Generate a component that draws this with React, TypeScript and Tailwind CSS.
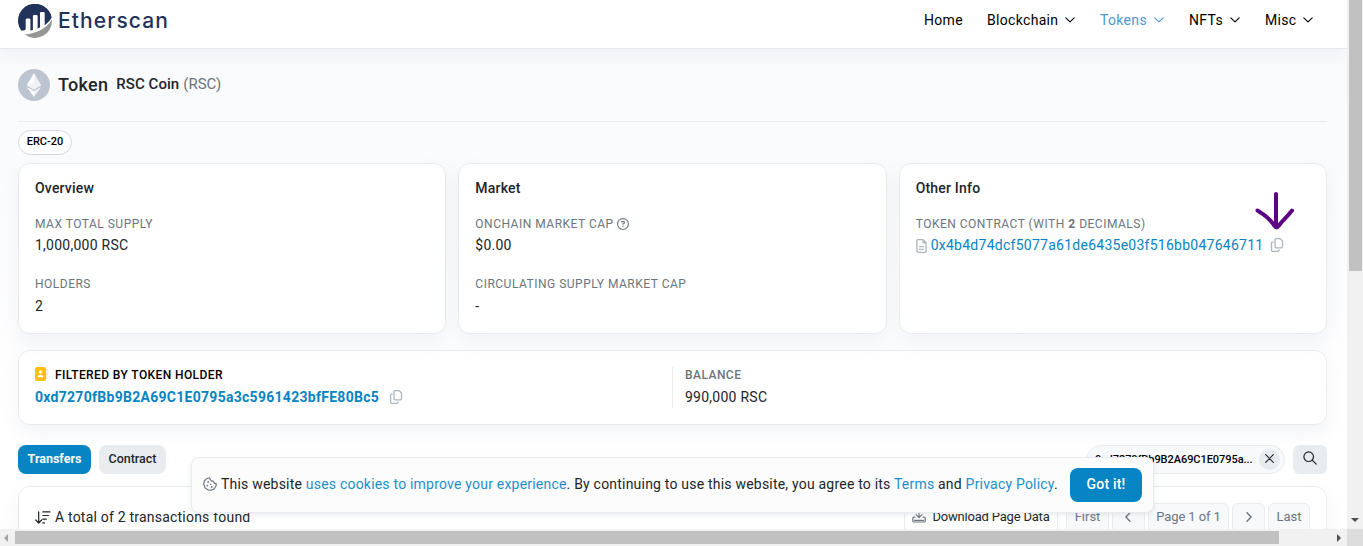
import React from "react";
import { FaRegCopy, FaRegFileLines, FaRegCircleQuestion } from "react-icons/fa6";

const Chevron = ({ className = "" }: { className?: string }) => (
  <svg className={className} width="10" height="6" viewBox="0 0 10 6" fill="none" stroke="currentColor" strokeWidth="1.1" strokeLinecap="round" strokeLinejoin="round">
    <path d="M.8.8 5 4.9 9.200.8" />
  </svg>
);

function Logo() {
  return (
    <svg width="34" height="34" viewBox="0 0 34 34">
      <path d="M3.100 26.500A17 17 0 1 1 33.700 13.500C32 16.500 29.500 19 26.700 21.200V9.300Q26.700 8 25.400 8H23.300Q22 8 22 9.300V23.500L19.600 24.600V12.300Q19.600 11 18.300 11H16.200Q14.900 11 14.900 12.300V26L12.400 26.500V15.800Q12.400 14.500 11.100 14.500H9Q7.700 14.500 7.700 15.800V24.500Q7.700 26.400 5.700 26.500Z" fill="#21325b" />
      <path d="M6.800 30.600C18 29.500 28 25 33.900 15.800A17 17 0 0 1 6.800 30.600Z" fill="#979695" />
    </svg>
  );
}

function EthIcon() {
  return (
    <svg width="32" height="32" viewBox="0 0 32 32">
      <circle cx="16" cy="16" r="16" fill="#bcc4d0" />
      <path d="M16 4 8.800 16.300 16 20.500Z" fill="#fff" />
      <path d="M16 4 23.200 16.300 16 20.500Z" fill="#f0f1f3" />
      <path d="M8.800 17.900 16 22.100V28Z" fill="#fff" />
      <path d="M23.200 17.900 16 22.100V28Z" fill="#f0f1f3" />
      <path d="M8.800 16.300 16 13.100 23.200 16.300 16 20.500Z" fill="#f1f2f5" />
    </svg>
  );
}

const label = "block h-[18px] text-[12px] leading-[18px] tracking-[0.5px] text-[#6c757d] whitespace-nowrap";
const value = "block h-[21px] text-[14px] leading-[21px] tracking-[0.25px] text-[#212529] whitespace-nowrap";
const card = "rounded-xl border border-[#e9ecef] bg-white shadow-[0_8px_19px_rgba(189,197,209,0.2)]";
const pager = "flex h-[34px] items-start justify-center rounded-md border border-[#e9ecef] bg-[#f8f9fa] pt-[3px] text-[13px] leading-[20px] text-[#6c757d] whitespace-nowrap";

function Nav() {
  const items = [
    { name: "Home", cls: "w-[63px]", arrow: false },
    { name: "Blockchain", cls: "w-[113px]", arrow: true },
    { name: "Tokens", cls: "w-[89px] text-[#4a9bd0]", arrow: true },
    { name: "NFTs", cls: "w-[76px]", arrow: true },
    { name: "Misc", cls: "w-[82px]", arrow: true },
  ];
  return (
    <nav className="flex h-[20px] items-center text-[14px] leading-[20px] tracking-[0.32px] text-black">
      {items.map((i) => (
        <a key={i.name} className={"flex items-center gap-[7px] " + i.cls}>
          {i.name}
          {i.arrow && <Chevron />}
        </a>
      ))}
    </nav>
  );
}

export default function App() {
  return (
    <div className="flex h-[546px] w-[1363px] flex-col overflow-hidden bg-white font-['Roboto',sans-serif]">
      <div className="flex h-[529px] shrink-0">
        <div className="relative h-[529px] w-[1347px] shrink-0 overflow-hidden bg-linear-to-b from-[#f8f9fb] to-white to-[420px]">
          <header className="flex h-[49px] items-start justify-between border-b border-[#e7eaed] bg-white pl-[18px] shadow-[0_8px_12px_rgba(189,197,209,0.12)]">
            <div className="mt-[4px] flex h-[34px] items-center gap-[6px]">
              <Logo />
              <span className="text-[21px] leading-[26px] font-medium tracking-[1.1px] text-[#21325b] font-['Inter',sans-serif] -mt-px">Etherscan</span>
            </div>
            <div className="pt-[10px]"><Nav /></div>
          </header>

          <main className="w-[1327px] pl-[18px]">
            <div className="flex h-[73px] items-start border-b border-[#e9ecef] pt-[20px]">
              <EthIcon />
              <h1 className="flex h-[30px] items-start pl-[8px] text-[18px] leading-[31px] font-medium tracking-[0.3px] text-[#212529] whitespace-nowrap">
                Token
                <span className="pl-[8px] text-[15px] tracking-[0.05px]">RSC Coin</span>
                <span className="pl-[4px] text-[15px] font-normal tracking-[0px] text-[#6c757d]">(RSC)</span>
              </h1>
            </div>
            <div className="flex h-[41px] pt-[8px]">
              <span className="flex h-[25px] w-[54px] justify-center rounded-full border border-[#d5d9dd] bg-white text-[11px] leading-[21px] font-medium text-black">ERC-20</span>
            </div>

            <div className="grid h-[171px] grid-cols-3 gap-[12px]">
              <section className={card + " px-[16px] pt-[14px]"}>
                <h2 className="h-[21px] text-[14px] leading-[21px] font-medium tracking-[0.2px] text-[#212529]">Overview</h2>
                <div className="pt-[16px]"><span className={label}>MAX TOTAL SUPPLY</span></div>
                <div className="pt-[2px]"><span className={value}>1,000,000 RSC</span></div>
                <div className="pt-[19px]"><span className={label}>HOLDERS</span></div>
                <div className="pt-[3px]"><span className={value}>2</span></div>
              </section>
              <section className={card + " px-[16px] pt-[14px]"}>
                <h2 className="h-[21px] text-[14px] leading-[21px] font-medium tracking-[0.2px] text-[#212529]">Market</h2>
                <div className="flex items-center gap-[3px] pt-[16px]"><span className={label}>ONCHAIN MARKET CAP</span><FaRegCircleQuestion size={12} className="mb-px text-[#6c757d]" /></div>
                <div className="pt-[2px]"><span className={value}>$0.00</span></div>
                <div className="pt-[19px]"><span className={label}>CIRCULATING SUPPLY MARKET CAP</span></div>
                <div className="pt-[3px]"><span className={value}>-</span></div>
              </section>
              <section className={card + " relative px-[16px] pt-[14px]"}>
                <h2 className="h-[21px] text-[14px] leading-[21px] font-medium tracking-[0.2px] text-[#212529]">Other Info</h2>
                <div className="pt-[16px]"><span className={label}>TOKEN CONTRACT (WITH <b>2</b> DECIMALS)</span></div>
                <div className="flex items-center pt-[2px]">
                  <FaRegFileLines size={14} className="w-[11px] text-[#adb5bd]" />
                  <a className="pl-[4px] text-[14px] leading-[21px] tracking-[0.26px] text-[#0784c3] whitespace-nowrap">0x4b4d74dcf5077a61de6435e03f516bb047646711</a>
                  <FaRegCopy size={14} className="mb-[2px] ml-[6px] text-[#adb5bd]" />
                </div>
                <svg className="absolute top-[26px] right-[30px]" width="42" height="42" viewBox="0 0 42 42" fill="none" stroke="#5b0382" strokeWidth="4" strokeLinecap="round" strokeLinejoin="round">
                  <path d="M22 4V36M3.500 20.500C11 25 17 30 20.500 36Q22.500 39 24.500 36C29 30 33 27 38 20.500" />
                </svg>
              </section>
            </div>

            <section className={card + " mt-[16px] flex h-[75px] px-[16px] pt-[16px]"}>
              <div className="h-[41px] w-[638px] shrink-0 border-r border-[#e9ecef]">
                <div className="flex h-[16px] items-center gap-[7px]">
                  <svg className="mb-[2px]" width="13" height="14" viewBox="0 0 13 14">
                    <rect width="11" height="14" rx="2" fill="#ffc107" />
                    <circle cx="5.500" cy="5" r="1.700" fill="#fff" />
                    <path d="M2.700 10.300Q2.700 7.700 5.500 7.700T8.300 10.300Z" fill="#fff" />
                    <path d="M12 2v2.500M12 5.800v2.500M12 9.600v2.400" stroke="#ffc9a0" strokeWidth="1" />
                  </svg>
                  <span className="text-[12px] leading-[16px] font-medium tracking-[0.4px] text-black whitespace-nowrap">FILTERED BY TOKEN HOLDER</span>
                </div>
                <div className="flex items-center pt-[4px]">
                  <a className="text-[14px] leading-[21px] font-bold tracking-[0.28px] text-[#0784c3] whitespace-nowrap">0xd7270fBb9B2A69C1E0795a3c5961423bfFE80Bc5</a>
                  <FaRegCopy size={14} className="mb-[2px] ml-[10px] text-[#adb5bd]" />
                </div>
              </div>
              <div className="pl-[12px]">
                <span className="block text-[12px] leading-[16px] font-medium tracking-[0.45px] text-[#6c757d]">BALANCE</span>
                <div className="pt-[4px]"><span className={value}>990,000 RSC</span></div>
              </div>
            </section>

            <div className="flex h-[61px] items-start justify-between pt-[20px]">
              <div className="flex gap-[8px] text-[12.500px] leading-[27px]">
                <button className="flex h-[29px] w-[73px] justify-center rounded-lg bg-[#0784c3] font-bold text-white">Transfers</button>
                <button className="flex h-[29px] w-[67px] justify-center rounded-lg bg-[#e9ecef] font-medium text-[#212529]">Contract</button>
              </div>
              <div className="flex gap-[8px]">
                <div className="flex h-[29px] w-[199px] items-center justify-between rounded-full border border-[#e9ecef] bg-[#f8f9fa] pr-[4px] pl-[8px]">
                  <span className="text-[11px] leading-[20px] font-medium tracking-[-0.05px] text-black whitespace-nowrap">0xd7270fBb9B2A69C1E0795a...</span>
                  <span className="flex size-[21px] items-center justify-center rounded-full bg-[#e9ecef]">
                    <svg className="mb-[2px]" width="9" height="9" viewBox="0 0 9 9" stroke="#212529" strokeWidth="1.200" strokeLinecap="round"><path d="m.7.7 7.600 7.600M8.300.7.7 8.300" /></svg>
                  </span>
                </div>
                <button className="flex h-[29px] w-[34px] justify-center rounded-md bg-[#e9ecef] pt-[6px]">
                  <svg width="14" height="14" viewBox="0 0 14 14" fill="none" stroke="#212529" strokeWidth="1.200" strokeLinecap="round"><circle cx="5.700" cy="5.700" r="4.800" /><path d="m9.200 9.200 4 4" /></svg>
                </button>
              </div>
            </div>

            <section className={card + " flex h-[90px] items-start justify-between px-[16px] pt-[16px]"}>
              <div className="flex items-center gap-[4px] pt-[4px]">
                <svg width="16" height="13" viewBox="0 0 16 13" fill="none" stroke="#212529" strokeWidth="1.200" strokeLinecap="round" strokeLinejoin="round">
                  <path d="M3.700.8v11M.8 9l2.900 3 2.900-3M7.800.9h7.200M7.800 4.500h5.500M7.800 8.200h3.500M7.800 11.900h1.700" />
                </svg>
                <span className="text-[14px] leading-[21px] tracking-[0.21px] text-[#212529] whitespace-nowrap">A total of 2 transactions found</span>
              </div>
              <div className="flex">
                <button className="mr-[8px] flex h-[34px] w-[154px] items-start justify-center gap-[6px] rounded-md border border-[#e9ecef] bg-white pt-[3px] text-[13px] leading-[20px] tracking-[-0.2px] text-[#212529] whitespace-nowrap">
                  <svg className="mt-[3px]" width="14" height="13" viewBox="0 0 14 13" fill="none" stroke="#6c757d" strokeWidth="1.200" strokeLinecap="round" strokeLinejoin="round">
                    <path d="M7 1v6.500M4 4.700l3 3 3-3M3 7.200H2Q.8 7.200.8 8.400v2.500Q.8 12 2 12h10q1.200 0 1.200-1.100V8.400q0-1.200-1.200-1.200h-1M2.500 10.300h9" />
                  </svg>
                  Download Page Data
                </button>
                <div className="flex gap-[3px]">
                  <span className={pager + " w-[43px]"}>First</span>
                  <span className={pager + " w-[33px]"}><svg className="mt-[5px] mr-px" width="6" height="10" viewBox="0 0 6 10" fill="none" stroke="#6c757d" strokeWidth="1.400" strokeLinecap="round" strokeLinejoin="round"><path d="M5 .8.9 5 5 9.200" /></svg></span>
                  <span className={pager + " w-[81px]"}><span className="tracking-[-0.1px]">Page 1 of 1</span></span>
                  <span className={pager + " w-[33px]"}><svg className="mt-[5px]" width="6" height="10" viewBox="0 0 6 10" fill="none" stroke="#6c757d" strokeWidth="1.400" strokeLinecap="round" strokeLinejoin="round"><path d="M1 .8 5.100 5 1 9.200" /></svg></span>
                  <span className={pager + " w-[42px]"}>Last</span>
                </div>
              </div>
            </section>
          </main>

          <div className="absolute top-[457px] left-[191px] flex h-[56px] w-[963px] items-center justify-between rounded-lg border border-[#e9ecef] bg-[#fcfcfd] pr-[11px] pl-[11px] shadow-[0_2px_5px_rgba(120,130,140,0.15)]">
            <div className="flex items-center gap-[4px] pb-[2px]">
              <svg width="14" height="14" viewBox="0 0 14 14" fill="none" stroke="#6c757d" strokeWidth="1.200" strokeLinejoin="round">
                <path d="M6.500.8 3.600 1.700 1.300 4 .7 7.300 2 10.700 4.800 12.900 8.300 13.200 11.300 11.700 13.100 8.800 13.300 6.800Q11 6.800 10.400 4.400 7.300 4 6.500.8Z" />
                <g fill="#6c757d" stroke="none"><circle cx="5.200" cy="4.900" r=".9" /><circle cx="4.300" cy="8.600" r=".9" /><circle cx="7.800" cy="7.200" r=".8" /><circle cx="8.700" cy="10" r=".9" /></g>
              </svg>
              <p className="text-[14px] leading-[21px] tracking-[0.208px] text-[#212529] whitespace-nowrap">
                This website <a className="text-[#1c8fcb]">uses cookies to improve your experience</a>. By continuing to use this website, you agree to its <a className="text-[#1c8fcb]">Terms</a> and <a className="text-[#1c8fcb]">Privacy Policy</a>.
              </p>
            </div>
            <button className="flex h-[34px] w-[72px] justify-center rounded-lg bg-[#0784c3] text-[14px] leading-[32px] font-medium tracking-[0.2px] text-white">Got it!</button>
          </div>
        </div>

        <div className="flex h-[529px] w-[16px] shrink-0 flex-col items-center justify-between bg-[#f1f1f1]">
          <div className="ml-[1px] h-[271px] w-[13px] bg-[#c1c1c1]" />
          <svg className="mb-[7px]" width="8" height="4" viewBox="0 0 8 4"><path d="M0 0h8L4 4Z" fill="#505050" /></svg>
        </div>
      </div>

      <div className="flex h-[17px] shrink-0 bg-[#f1f1f1]">
        <div className="flex w-[1347px] items-center">
          <svg className="mr-[7px] ml-[4px]" width="4" height="8" viewBox="0 0 4 8"><path d="M4 0v8L0 4Z" fill="#a3a3a3" /></svg>
          <div className="h-[13px] w-[1264px] bg-[#c1c1c1]" />
          <svg className="ml-[58px]" width="4" height="8" viewBox="0 0 4 8"><path d="M0 0v8l4-4Z" fill="#505050" /></svg>
        </div>
        <div className="w-[16px] bg-[#dcdcdc]" />
      </div>
    </div>
  );
}
